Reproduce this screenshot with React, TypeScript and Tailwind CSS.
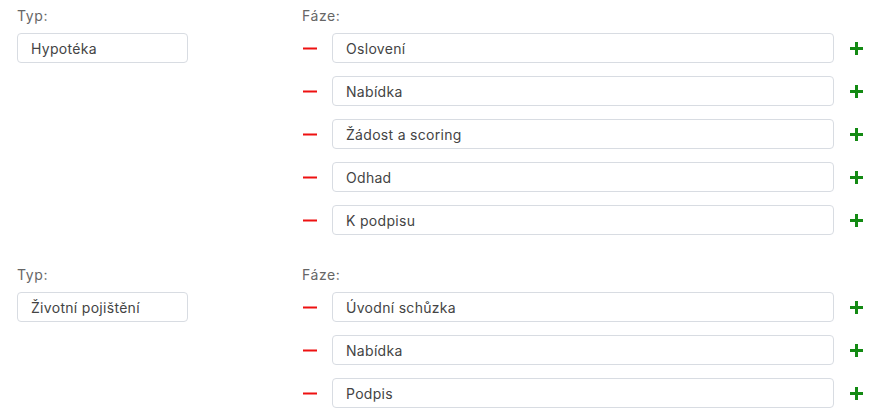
import React from 'react';

type Section = { type: string; phases: string[] };

const sections: Section[] = [
  { type: 'Hypotéka', phases: ['Oslovení', 'Nabídka', 'Žádost a scoring', 'Odhad', 'K podpisu'] },
  { type: 'Životní pojištění', phases: ['Úvodní schůzka', 'Nabídka', 'Podpis'] },
];

const Minus = () => (
  <svg width="14" height="3" viewBox="0 0 14 3" className="block">
    <rect x="0" y="0.5" width="14" height="2" fill="#ee1111" />
  </svg>
);

const Plus = () => (
  <svg width="13" height="13" viewBox="0 0 13 13" className="block">
    <rect x="0" y="5" width="13" height="3" fill="#138a13" />
    <rect x="5" y="0" width="3" height="13" fill="#138a13" />
  </svg>
);

const inputCls =
  'h-[30px] rounded-[4px] border border-[#d8dce2] bg-white px-[13px] text-[14px] tracking-[0.3px] text-[#444] outline-none';

const App = () => {
  return (
    <div
      className="min-h-screen bg-white pl-[17px] pt-[7px] flex flex-col gap-[31px]"
      style={{ fontFamily: 'Inter, "Noto Sans", sans-serif' }}
    >
      {sections.map((s, i) => (
        <div key={i} className="flex">
          <div className="w-[285px] shrink-0">
            <div className="text-[14px] leading-[18px] tracking-[0.6px] text-[#666] mb-[8px]">Typ:</div>
            <input readOnly value={s.type} className={`${inputCls} w-[171px]`} />
          </div>
          <div>
            <div className="text-[14px] leading-[18px] tracking-[0.6px] text-[#666] mb-[8px]">Fáze:</div>
            <div className="flex flex-col gap-[13px]">
              {s.phases.map((p, j) => (
                <div key={j} className="flex items-center">
                  <button type="button" className="w-[30px] pl-[1px] h-[30px] flex items-center">
                    <Minus />
                  </button>
                  <input readOnly value={p} className={`${inputCls} w-[502px]`} />
                  <button type="button" className="ml-[16px] h-[30px] flex items-center">
                    <Plus />
                  </button>
                </div>
              ))}
            </div>
          </div>
        </div>
      ))}
    </div>
  );
};

export default App;
